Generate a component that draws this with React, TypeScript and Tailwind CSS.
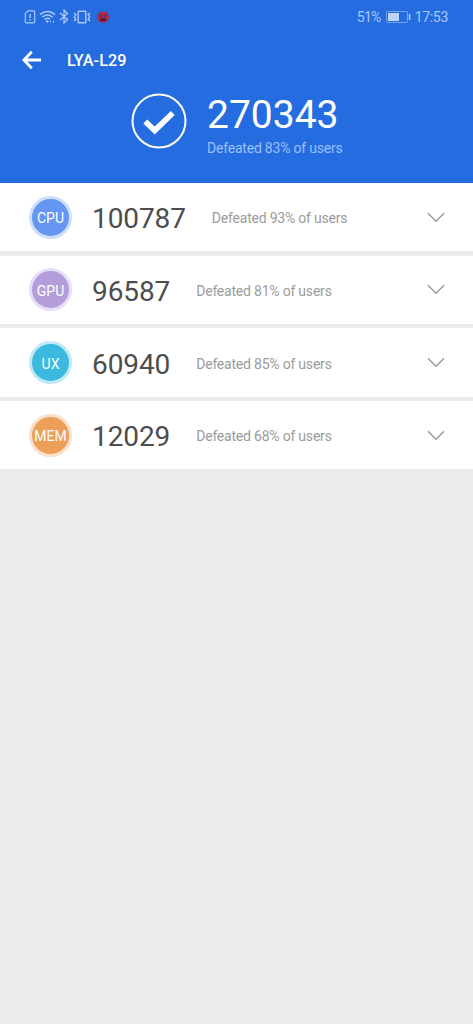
import { Fragment } from "react";

type Score = {
  label: string;
  score: number;
  percent: number;
  badge: string;
};

const scores: Score[] = [
  { label: "CPU", score: 100787, percent: 93, badge: "bg-[#6597f2] border-[#cfdffb]" },
  { label: "GPU", score: 96587, percent: 81, badge: "bg-[#b39ddb] border-[#e7dff8]" },
  { label: "UX", score: 60940, percent: 85, badge: "bg-[#3cb9df] border-[#bfe9f6]" },
  { label: "MEM", score: 12029, percent: 68, badge: "bg-[#eb9f59] border-[#fbdfc8]" },
];

function StatusBar() {
  return (
    <div className="flex h-[33px] items-center justify-between pl-[24px] pr-[25px] text-[#a9c8fb]">
      <div className="flex items-center">
        {/* SIM alert */}
        <svg width="12" height="14" viewBox="0 0 12 14" fill="none" stroke="currentColor" strokeWidth="1.2">
          <path d="M4 .9h5.5q1.2 0 1.2 1.2v9.6q0 1.2-1.2 1.2h-7q-1.2 0-1.2-1.2V3.6z" />
          <path d="M6 4v4M6 9.3v1.5" strokeWidth="1.5" />
        </svg>
        {/* Wi-Fi */}
        <svg className="ml-[3px]" width="17" height="14" viewBox="0 0 17 14" fill="none" stroke="currentColor" strokeWidth="1.5">
          <path d="M1 4.6Q8.5 -1.7 16 4.6M3.3 7.2Q8.5 2.8 13.7 7.2M5.6 9.6Q8.5 7.2 11 9.2" />
          <path d="M6.4 11.5 8.5 10l1.2 1.2L8.500 13z" fill="currentColor" stroke="none" />
          <path d="m10.500 11.700 1.500-1.400v2.800zM15.500 11.700 14 10.300v2.800z" fill="currentColor" stroke="none" />
        </svg>
        {/* Bluetooth */}
        <svg className="ml-[3px]" width="10" height="15" viewBox="0 0 10 15" fill="none" stroke="currentColor" strokeWidth="1.3">
          <path d="M1 4l7.500 6.500L5 14V1l3.500 3.500L1 11" />
        </svg>
        {/* Vibrate */}
        <svg className="ml-[4px]" width="18" height="14" viewBox="0 0 18 14" fill="none" stroke="currentColor" strokeWidth="1.4">
          <rect x="5.2" y="1.2" width="7.6" height="11.6" rx=".6" />
          <path d="M1 3l1.8 1.5L1.4 7l1.4 2.5L1 11M17 3l-1.8 1.5L16.600 7l-1.400 2.500L17 11" strokeWidth="1.5" />
        </svg>
        <svg className="ml-[5px]" width="14" height="14" viewBox="0 0 14 14">
          <path d="M3.500 1.200 6 2h2l2.500-.8.800 2A6 5.800 0 1 1 2.700 3.200z" fill="#a52c51" />
          <path d="m3.800 5.300 2 1.200M10.200 5.300l-2 1.200M4.500 10.500V9.300Q7 7.700 9.500 9.300v1.200z" fill="#4c173c" stroke="#4c173c" />
        </svg>
      </div>
      <div className="flex items-center text-[14px] leading-none">
        <span className="tracking-[-0.7px]">51%</span>
        <svg className="ml-[5px] mr-[4px]" width="25" height="12" viewBox="0 0 25 12">
          <rect x=".5" y=".5" width="21" height="11" rx="1" fill="none" stroke="currentColor" strokeOpacity=".6" />
          <rect x="2" y="2" width="11" height="8" fill="#bcd3fa" />
          <path d="M23.6 3v6" stroke="currentColor" strokeWidth="1.6" />
        </svg>
        <span className="tracking-[-0.3px]">17:53</span>
      </div>
    </div>
  );
}

export default function App() {
  return (
    <div className="min-h-screen bg-[#ececec] font-['Roboto',sans-serif]">
      <header className="h-[183px] bg-[#266ce1]">
        <StatusBar />

        <div className="flex h-[54px] items-center pl-[22px] text-white">
          <svg width="20" height="20" viewBox="0 0 20 20" fill="none" stroke="currentColor" strokeWidth="2.8">
            <path d="M9.8 1.700 1.900 10l7.900 8.300M2 10h17" />
          </svg>
          <h1 className="ml-[25px] pt-[2px] text-[16.3px] font-medium leading-none">LYA-L29</h1>
        </div>

        <div className="flex pl-[131px] pt-[6px]">
          <svg width="56" height="56" viewBox="0 0 56 56" fill="none" stroke="white">
            <circle cx="28" cy="28" r="26.5" strokeWidth="2" />
            <path d="m14.3 28.6 9.4 9L41.800 20" strokeWidth="5.6" />
          </svg>
          <div className="ml-[20px]">
            <div className="text-[39px] leading-[44px] text-white">270343</div>
            <div className="mt-[3px] text-[14px] leading-[16px] tracking-[-0.21px] text-[#9cc0f8]">Defeated 83% of users</div>
          </div>
        </div>
      </header>

      <main>
        {scores.map((item, i) => (
          <Fragment key={item.label}>
            {i > 0 && <div className="h-[4.3px]" />}
            <div className="flex h-[68.4px] items-center bg-white pl-[29px] pr-[28px]">
              <div className={`flex size-[43px] shrink-0 items-center justify-center rounded-full border-[3px] text-[14px] leading-none text-white ${item.badge}`}>
                <span className="pt-[2px]">{item.label}</span>
              </div>
              <span className="ml-[20px] pt-[4px] text-[28px] leading-none tracking-[-0.1px] text-[#4d4d4d]">{item.score}</span>
              <span className="ml-[26px] pt-[2px] text-[14px] leading-none tracking-[-0.21px] text-[#9b9b9b]">Defeated {item.percent}% of users</span>
              <svg className="ml-auto" width="18" height="11" viewBox="0 0 18 11" fill="none" stroke="#999" strokeWidth="1.4">
                <path d="m1 1.2 8 8 8-8" />
              </svg>
            </div>
          </Fragment>
        ))}
      </main>
    </div>
  );
}
